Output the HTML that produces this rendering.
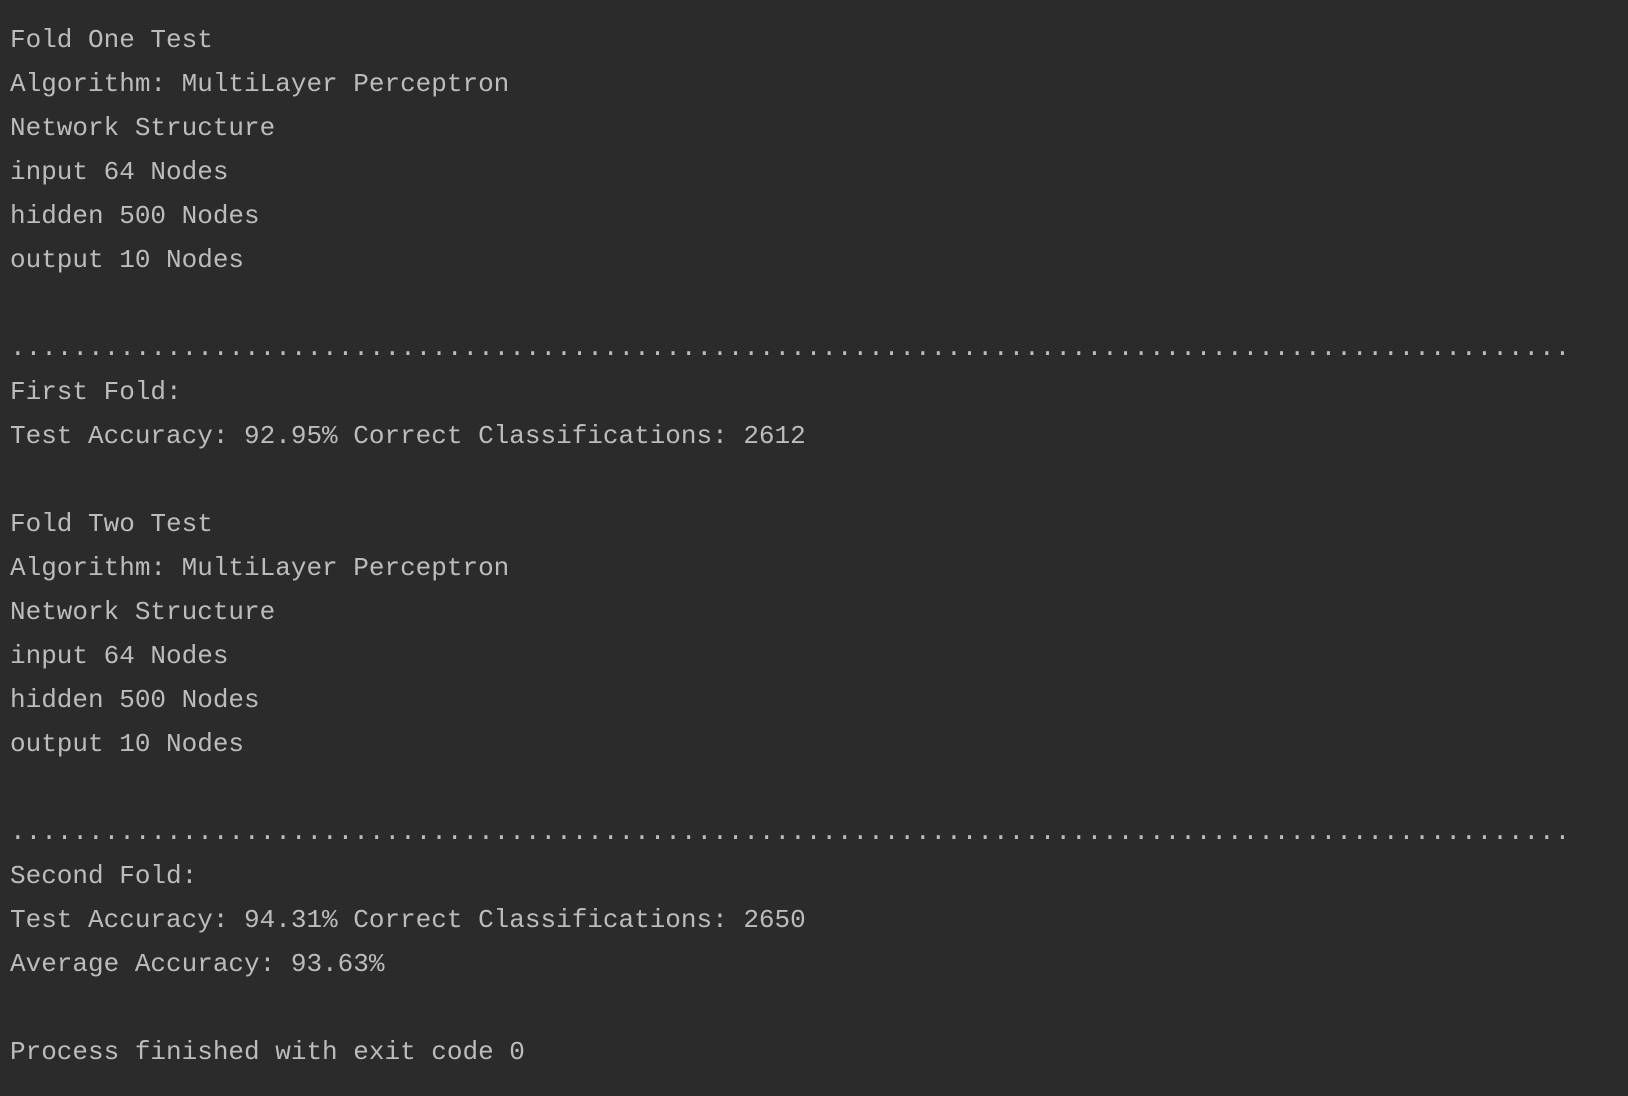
<!DOCTYPE html>
<html><head><meta charset="utf-8"><style>
html,body{margin:0;padding:0;background:#2b2b2b;width:1628px;height:1096px;overflow:hidden}
pre{margin:0;padding:18px 0 0 10px;font-family:"Liberation Mono",monospace;font-size:26px;line-height:44px;color:#bcbcbc;white-space:pre}
</style></head><body><pre>Fold One Test
Algorithm: MultiLayer Perceptron
Network Structure
input 64 Nodes
hidden 500 Nodes
output 10 Nodes

....................................................................................................
First Fold:
Test Accuracy: 92.95% Correct Classifications: 2612

Fold Two Test
Algorithm: MultiLayer Perceptron
Network Structure
input 64 Nodes
hidden 500 Nodes
output 10 Nodes

....................................................................................................
Second Fold:
Test Accuracy: 94.31% Correct Classifications: 2650
Average Accuracy: 93.63%

Process finished with exit code 0</pre></body></html>
